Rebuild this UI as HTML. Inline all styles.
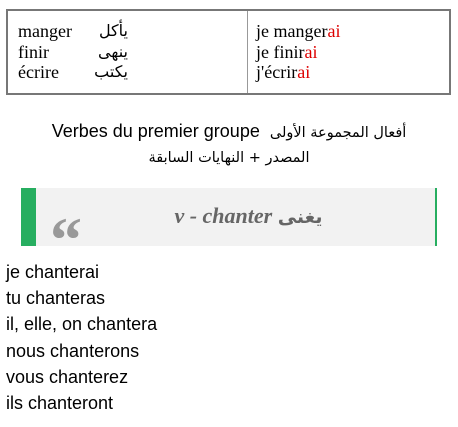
<!DOCTYPE html>
<html><head><meta charset="utf-8"><style>
body{margin:0;width:458px;height:427px;background:#fff;position:relative;font-family:"Liberation Sans","DejaVu Sans",sans-serif;overflow:hidden}
.tbl{position:absolute;left:6px;top:9px;width:441px;height:82px;border:2px solid #777;}
.div{position:absolute;left:239px;top:0;width:1px;height:82px;background:#999}
.cell{position:absolute;top:10px;font-family:"Liberation Serif",serif;font-size:18px;line-height:20.5px;color:#000}
.r{color:#d00}
.t{position:absolute;left:0;width:458px;text-align:center;font-size:18px;color:#000}
.ar{font-family:"DejaVu Sans",sans-serif;font-size:14.5px}
.bq{position:absolute;left:21px;top:188px;width:416px;height:58px;background:#f2f2f2;border-left:15px solid #27ae60;border-right:2px solid #27ae60;box-sizing:border-box}
.q{position:absolute;left:14px;top:24px;font-family:"Liberation Serif",serif;font-size:64px;font-weight:bold;color:#999;line-height:56px}
.h{position:absolute;left:13px;width:100%;top:15px;text-align:center;font-family:"Liberation Serif",serif;font-weight:bold;font-style:italic;font-size:22px;color:#666}
.h .ar{font-size:19px;font-style:normal}
.list{position:absolute;left:6px;top:259px;font-size:18px;line-height:26.2px;color:#000}
</style></head><body>
<div class="tbl"><div class="div"></div>
<div class="cell" style="left:10px">manger<br>finir<br>écrire</div>
<div class="cell" style="left:78px;width:42px;text-align:right;font-family:'DejaVu Sans',sans-serif;font-size:16px">يأكل<br>ينهى<br>يكتب</div>
<div class="cell" style="left:248px">je manger<span class="r">ai</span><br>je finir<span class="r">ai</span><br>j'écrir<span class="r">ai</span></div>
</div>
<div class="t" style="top:121px">Verbes du premier groupe &nbsp;<span class="ar">أفعال المجموعة الأولى</span></div>
<div class="t" style="top:146px"><span class="ar">المصدر + النهايات السابقة</span></div>
<div class="bq"><div class="q">“</div><div class="h">v - chanter <span class="ar">يغنى</span></div></div>
<div class="list">je chanterai<br>tu chanteras<br>il, elle, on chantera<br>nous chanterons<br>vous chanterez<br>ils chanteront</div>
</body></html>
